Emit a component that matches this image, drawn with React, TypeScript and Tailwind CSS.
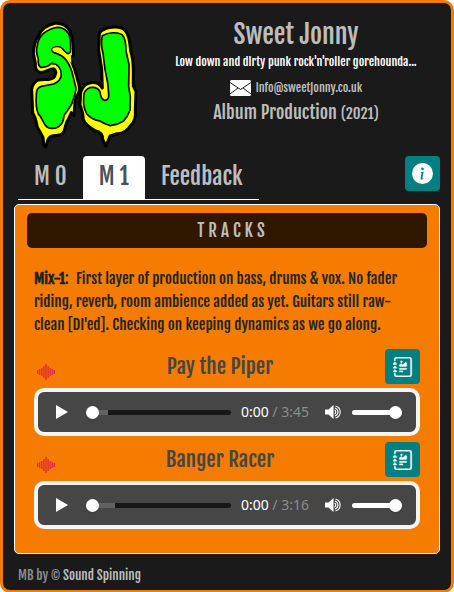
import { useState } from "react";
import { BsInfoCircleFill, BsJournalRichtext } from "react-icons/bs";

const tracks = [
  { id: "piper", title: "Pay the Piper", length: "3:45", buffered: 15 },
  { id: "banger", title: "Banger Racer", length: "3:16", buffered: 20 },
];

const tabs = ["M 0", "M 1", "Feedback"];

function Logo() {
  return (
    <svg role="img" aria-label="Sweet Jonny" viewBox="84 60 336 390" className="h-[130px] w-[112px] shrink-0">
      <g stroke="#000" strokeLinejoin="round">
        <path
          fill="#ff0"
          strokeWidth="9"
          d="M165 70C185 68 204 78 210 94C217 112 222 138 220 166Q217 174 208 172C219 190 229 222 236 252Q242 270 234 282Q224 296 224 318L222 347L214 338L205 358Q198 368 194 389Q190 404 178 405L156 408Q145 412 142 425L137 441L131 435L129 412Q121 397 112 382L106 356L98 338L95 268Q98 248 114 240C136 237 154 242 163 231Q172 213 161 206C147 206 137 219 119 217Q104 212 106 190L100 160Q101 128 116 107Q127 78 165 70Z"
        />
        <path
          fill="#0f0"
          strokeWidth="5"
          d="M162 84C181 79 199 86 207 103Q214 124 212 146Q213 160 204 161Q192 155 187 146Q177 137 160 143Q149 151 162 158C179 162 189 168 199 181Q214 203 219 228L228 265Q226 283 219 300C215 319 202 330 192 347Q190 371 176 380Q157 390 141 381C127 370 130 355 115 342Q106 322 109 284Q108 264 124 259L161 252Q183 242 184 225C184 206 174 191 154 190Q144 203 122 202Q113 196 115 177Q106 153 112 137Q116 98 162 84Z"
        />
        <path fill="#ff0" stroke="none" d="M158 145Q172 138 183 145Q188 154 202 165L213 169L214 190L199 172Q184 158 166 155Q155 152 158 145Z" />
        <path
          fill="#ff0"
          strokeWidth="9"
          d="M298 99C310 83 344 77 365 84C386 94 389 121 392 153Q400 178 400 211L400 258L408 274L406 330Q409 360 392 377Q374 403 351 401L330 408L318 438L308 418Q309 397 285 392Q257 377 250 359L248 340L240 313L242 277Q248 254 272 248Q296 244 307 264L305 207L296 151Z"
        />
        <path
          fill="#0f0"
          strokeWidth="5"
          d="M307 107C324 97 352 95 366 104Q378 116 378 153L387 194L386 260L391 291L390 330Q383 350 370 364Q352 375 331 377Q311 371 300 363Q275 359 260 341Q249 321 251 295Q249 270 269 263Q291 258 300 275Q302 297 313 301Q328 300 326 283Q325 266 323 249L315 208L309 160Q301 131 307 107Z"
        />
      </g>
    </svg>
  );
}

function Envelope() {
  return (
    <svg aria-hidden="true" viewBox="0 0 21 16" className="h-4 w-[21px]">
      <rect width="21" height="16" rx="1.5" fill="#fff" />
      <path d="M0 2.5L10.5 9.5L21 2.5M0 14L8 8M21 14L13 8" fill="none" stroke="#1a1a1a" strokeWidth="1" />
    </svg>
  );
}

function Waveform() {
  return (
    <svg aria-hidden="true" viewBox="0 0 18 16" className="h-4 w-[18px] shrink-0">
      <path
        d="M.7 6v4M2.700 5v6M4.800 4v8M6.900 2v12M9 0v16M11.100 2v12M13.200 4v8M15.300 5v6M17.300 6v4"
        stroke="#dc2a3a"
        strokeWidth="1.300"
      />
    </svg>
  );
}

function Speaker() {
  return (
    <svg aria-hidden="true" viewBox="0 0 16 14" className="h-[14px] w-4">
      <path d="M0 4.5h3.5L8.500 0v14L3.500 9.500H0z" fill="#fff" />
      <path d="M9.500 5a2.200 2.200 0 0 1 0 4M10 3a4.200 4.200 0 0 1 0 8M10.500 1a6.200 6.200 0 0 1 0 12" fill="none" stroke="#fff" strokeWidth="1.100" />
    </svg>
  );
}

const thumb =
  "appearance-none bg-transparent [&::-webkit-slider-runnable-track]:h-[5px] [&::-webkit-slider-runnable-track]:rounded-full [&::-webkit-slider-thumb]:-mt-1 [&::-webkit-slider-thumb]:size-[13px] [&::-webkit-slider-thumb]:appearance-none [&::-webkit-slider-thumb]:rounded-full [&::-webkit-slider-thumb]:bg-white [&::-webkit-slider-thumb]:shadow";

function Player({ title, length, buffered }: { title: string; length: string; buffered: number }) {
  return (
    <div className="flex h-12 items-center rounded-[10px] border-4 border-[#f5f5f5] bg-[#464646] pr-[14px] pl-[18px]">
      <button type="button" aria-label={`Play ${title}`} className="mr-[18px]">
        <svg aria-hidden="true" viewBox="0 0 12 14" className="h-[14px] w-3">
          <path d="M0 0L12 7L0 14z" fill="#fff" />
        </svg>
      </button>
      <input
        type="range"
        aria-label={`Position in ${title}`}
        defaultValue={0}
        style={{ "--buffered": `${buffered}%` } as React.CSSProperties}
        className={`${thumb} h-[13px] min-w-0 flex-1 [&::-webkit-slider-runnable-track]:bg-[linear-gradient(to_right,#626262_var(--buffered),#171717_var(--buffered))]`}
      />
      <span className="ml-[10px] font-['Noto_Sans',sans-serif] text-sm whitespace-nowrap text-[#8c8c8c]">
        <span className="text-white">0:00</span> / {length}
      </span>
      <button type="button" aria-label={`Mute ${title}`} className="mr-[11px] ml-4">
        <Speaker />
      </button>
      <input
        type="range"
        aria-label={`Volume of ${title}`}
        defaultValue={100}
        className={`${thumb} h-[13px] w-[50px] [&::-webkit-slider-runnable-track]:bg-white`}
      />
    </div>
  );
}

export default function App() {
  const [active, setActive] = useState("M 1");
  return (
    <div className="bg-white font-['Fjalla_One','Liberation_Sans_Narrow','Roboto_Condensed','Liberation_Sans',sans-serif]">
      <main className="rounded-[10px] border-3 border-[#f57c00] bg-[#1a1a1a] px-[11px] pb-[5px]">
        <header className="flex gap-3 pt-[17px] pl-[14px]">
          <Logo />
          <div className="-mt-1 min-w-0 flex-1 text-center text-[#bdbdbd]">
            <h1 className="text-[26px] leading-9">Sweet Jonny</h1>
            <p className="text-[12px] leading-5 text-white">Low down and dirty punk rock'n'roller gorehounda...</p>
            <a href="mailto:info@sweetjonny.co.uk" className="mt-1 flex items-center justify-center gap-[5px] text-[12px] leading-6">
              <Envelope />
              info@sweetjonny.co.uk
            </a>
            <h2 className="text-[18px] leading-6">
              Album Production <span className="text-[15px]">(2021)</span>
            </h2>
          </div>
        </header>

        <div className="mt-[6px] flex items-start justify-between pl-1">
          <div role="tablist" className="flex h-11 border-b border-white text-[23px]">
            {tabs.map((tab) => (
              <button
                key={tab}
                type="button"
                role="tab"
                aria-selected={tab === active}
                onClick={() => setActive(tab)}
                className={`rounded-t px-4 ${tab === active ? "bg-white text-[#495057]" : "text-[#bdbdbd]"}`}
              >
                {tab}
              </button>
            ))}
          </div>
          <button type="button" aria-label="Information" className="flex size-[35px] items-center justify-center rounded bg-[#008080] text-white">
            <BsInfoCircleFill size={21} />
          </button>
        </div>

        <section className="mt-1 rounded-[5px] border border-white bg-[#f57c00] px-3 pt-2 pb-6">
          <h2 className="rounded-[5px] bg-[#301800] pl-3 text-center text-[17px] leading-[35px] tracking-[4px] text-[#bdbdbd]">TRACKS</h2>
          <div className="px-[7px]">
            <p className="mt-[19px] mb-[13px] text-[15px] leading-[23px] text-[#212529]">
              <b>Mix-1</b>
              <span className="mr-1">:</span> First layer of production on bass, drums &amp; vox. No fader riding, reverb, room ambience added as yet. Guitars still raw-clean
              [DI'ed]. Checking on keeping dynamics as we go along.
            </p>
            {tracks.map((track) => (
              <article key={track.id} className="mb-[6px] last:mb-0">
                <div className="mb-[4px] flex items-end pl-[3px]">
                  <div className="pb-1">
                    <Waveform />
                  </div>
                  <h3 className="flex-1 self-start text-center text-[21px] leading-[35px] text-[#464646]">{track.title}</h3>
                  <button type="button" aria-label={`Notes for ${track.title}`} className="flex size-[35px] items-center justify-center rounded bg-[#008080] text-white">
                    <BsJournalRichtext size={20} stroke="currentColor" strokeWidth={0.3} />
                  </button>
                </div>
                <Player title={track.title} length={track.length} buffered={track.buffered} />
              </article>
            ))}
          </div>
        </section>

        <footer className="mt-[11px] pl-1 text-[13px] leading-5 text-[#8c8c8c]">
          MB by © <a href="#sound-spinning" className="text-[#bdbdbd]">Sound Spinning</a>
        </footer>
      </main>
    </div>
  );
}
